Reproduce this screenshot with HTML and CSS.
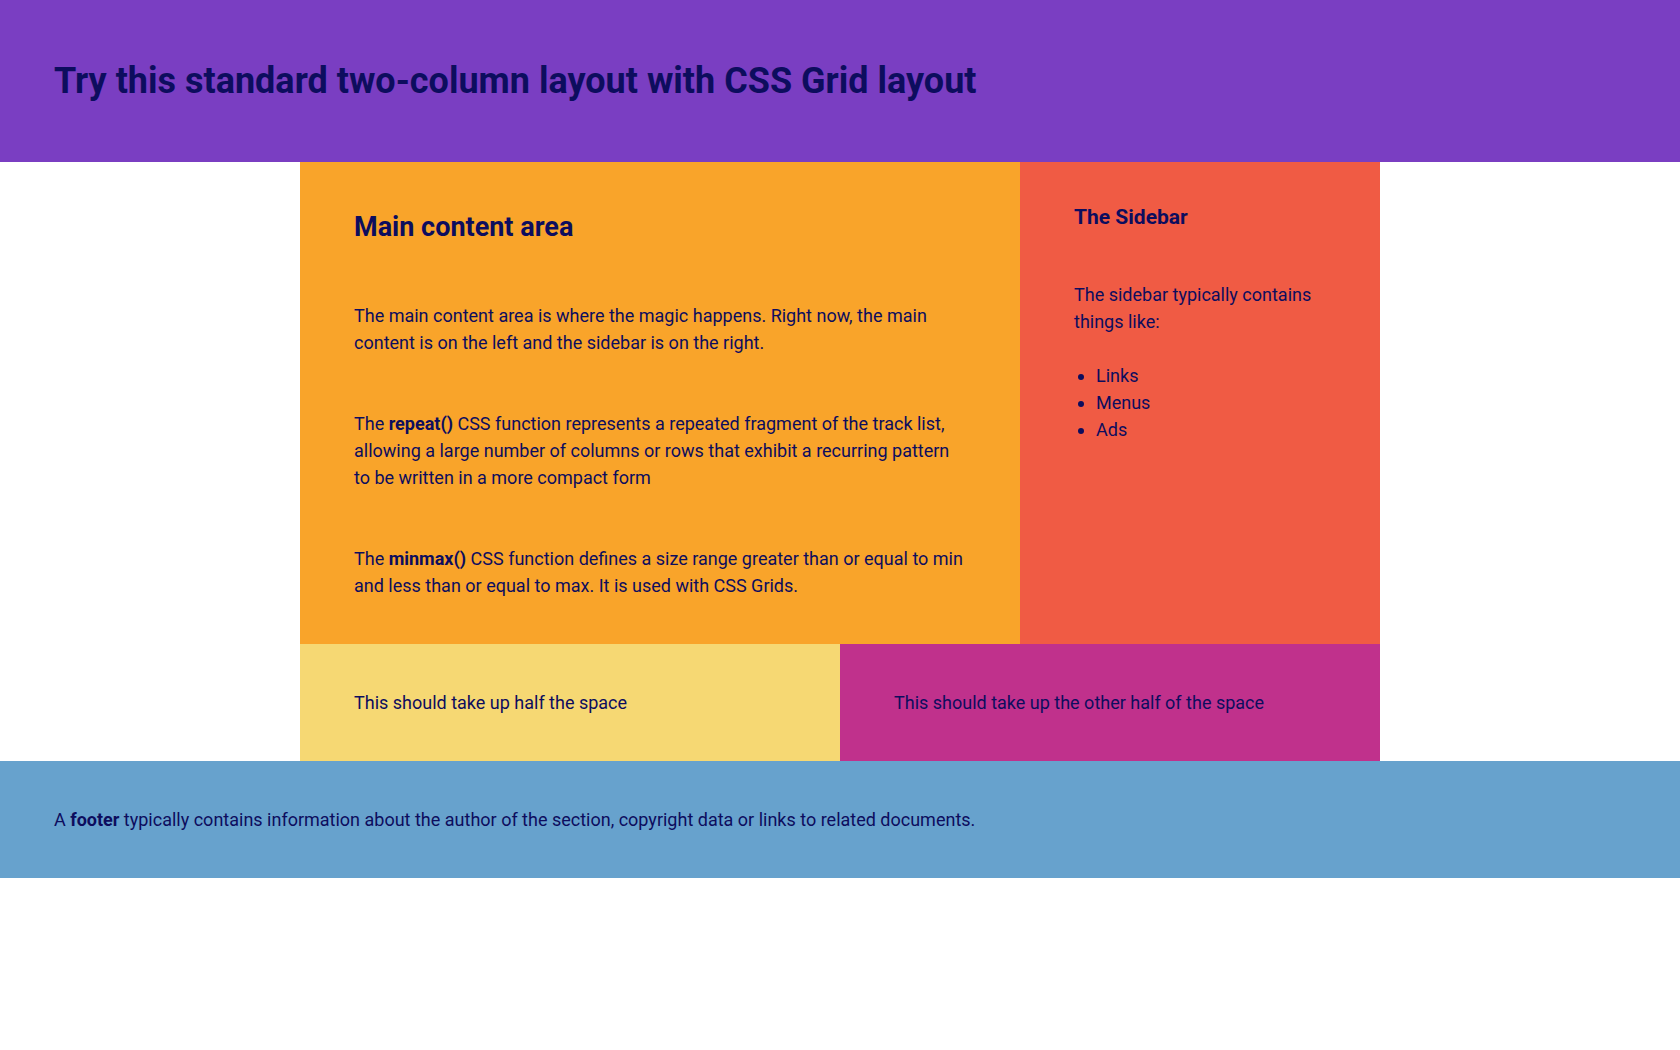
FILE: index.html
```html
<!DOCTYPE html>
<html lang="en">
<head>
<meta charset="utf-8">
<title>CSS Grid two-column layout</title>
<link rel="stylesheet" href="styles.css">
</head>
<body>
<header class="site-header">
  <h1 class="site-title">Try this standard two-column layout with CSS Grid layout</h1>
</header>
<div class="layout">
  <main class="main">
    <h2 class="main-title">Main content area</h2>
    <p class="text">The main content area is where the magic happens. Right now, the main content is on the left and the sidebar is on the right.</p>
    <p class="text">The <strong>repeat()</strong> CSS function represents a repeated fragment of the track list, allowing a large number of columns or rows that exhibit a recurring pattern to be written in a more compact form</p>
    <p class="text">The <strong>minmax()</strong> CSS function defines a size range greater than or equal to min and less than or equal to max. It is used with CSS Grids.</p>
  </main>
  <aside class="sidebar">
    <h3 class="sidebar-title">The Sidebar</h3>
    <p class="text">The sidebar typically contains things like:</p>
    <ul class="sidebar-list">
      <li>Links</li>
      <li>Menus</li>
      <li>Ads</li>
    </ul>
  </aside>
  <section class="half half-left">
    <p class="text">This should take up half the space</p>
  </section>
  <section class="half half-right">
    <p class="text">This should take up the other half of the space</p>
  </section>
</div>
<footer class="site-footer">
  <p class="text">A <strong>footer</strong> typically contains information about the author of the section, copyright data or links to related documents.</p>
</footer>
</body>
</html>
```
FILE: styles.css
```css
html, body {
  margin: 0;
  padding: 0;
  background: #ffffff;
}

body {
  font-family: Roboto, "Liberation Sans", Arial, sans-serif;
  font-size: 18px;
  line-height: 27px;
  color: #0d0d5e;
}

.site-header {
  background: #7a3ec2;
  padding: 45px 54px;
}

.site-title {
  margin: 0;
  font-size: 36px;
  line-height: 72px;
  font-weight: 700;
}

.layout {
  width: 1080px;
  margin: 0 auto;
  display: grid;
  grid-template-columns: repeat(6, 1fr);
}

.main,
.sidebar,
.half {
  padding: 45px 54px;
}

.main {
  grid-column: span 4;
  background: #f9a42a;
}

.sidebar {
  grid-column: span 2;
  background: #f05b44;
}

.half {
  grid-column: span 3;
}

.half-left {
  background: #f6d873;
}

.half-right {
  background: #c0318c;
}

.text {
  margin: 0;
}

.main-title {
  margin: 0;
  font-size: 27px;
  line-height: 40.5px;
  font-weight: 700;
}

.main .text {
  margin-top: 54px;
}

.sidebar-title {
  margin: 0 0 53px;
  font-size: 21px;
  line-height: 21px;
  font-weight: 700;
}

.sidebar-list {
  margin: 27px 0 0;
  padding-left: 22px;
}

.site-footer {
  background: #67a2cd;
  padding: 45px 54px;
}
```
